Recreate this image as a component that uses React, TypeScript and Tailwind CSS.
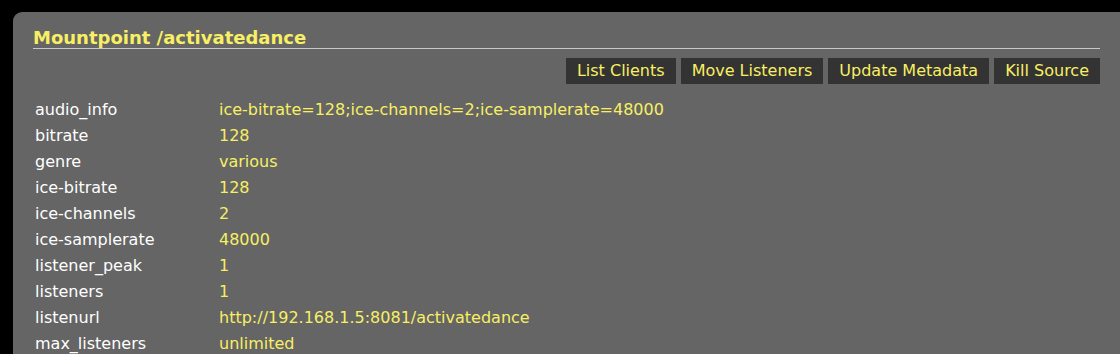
import React from "react";

const rows: [string, string][] = [
  ["audio_info", "ice-bitrate=128;ice-channels=2;ice-samplerate=48000"],
  ["bitrate", "128"],
  ["genre", "various"],
  ["ice-bitrate", "128"],
  ["ice-channels", "2"],
  ["ice-samplerate", "48000"],
  ["listener_peak", "1"],
  ["listeners", "1"],
  ["listenurl", "http://192.168.1.5:8081/activatedance"],
  ["max_listeners", "unlimited"],
];

const buttons = ["List Clients", "Move Listeners", "Update Metadata", "Kill Source"];

export default function App() {
  return (
    <div
      className="h-[354px] w-[1120px] overflow-hidden bg-black pl-[13px] pt-[12px] text-white"
      style={{ fontFamily: '"DejaVu Sans", Verdana, sans-serif' }}
    >
      <div className="mr-[-40px] rounded-tl-[9px] bg-[#656565] pl-[20px] pr-[60px] pt-[17px] pb-4">
        <h3 className="border-b border-[#c8c8c8] pb-[1px] text-[18px] font-bold leading-[18px] text-[#f8ef64]">
          Mountpoint /activatedance
        </h3>
        <div className="mt-[9px] flex justify-end gap-[5px]">
          {buttons.map((b) => (
            <span
              key={b}
              className="flex h-[26px] items-center bg-[#333333] px-[11px] text-[16px] text-[#f8ef64]"
            >
              {b}
            </span>
          ))}
        </div>
        <div className="mt-[13px] grid grid-cols-[186px_1fr] text-[16px]">
          {rows.map(([k, v]) => (
            <React.Fragment key={k}>
              <div className="h-[26px] pl-[2px] leading-[26px]">{k}</div>
              <div className="h-[26px] leading-[26px] text-[#f8ef64]">{v}</div>
            </React.Fragment>
          ))}
        </div>
      </div>
    </div>
  );
}
